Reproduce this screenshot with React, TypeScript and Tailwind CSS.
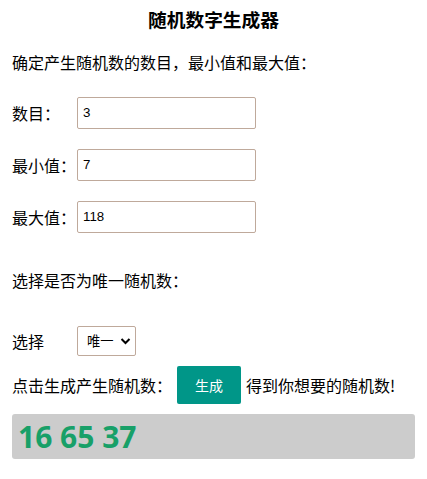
import React from "react";

const cjk = { fontFamily: '"Noto Sans CJK SC", "Noto Sans", sans-serif' };

function Row({ label, value }: { label: string; value: string }) {
  return (
    <div className="flex items-center h-[32px]">
      <span className="w-[65px] text-[16px] text-black" style={cjk}>{label}</span>
      <div className="w-[179px] h-[32px] border border-[#bfa99b] rounded-[2px] bg-white flex items-center px-[5px]">
        <span className="text-[13.3px] text-black" style={{ fontFamily: '"Liberation Sans", Arial, sans-serif' }}>{value}</span>
      </div>
    </div>
  );
}

export default function App() {
  return (
    <div className="w-[427px] h-[479px] bg-white px-[12px] text-black" style={cjk}>
      <div className="pt-[7px] h-[31px] text-center text-[18.72px] font-bold leading-[24px]">随机数字生成器</div>
      <div className="mt-[19px] text-[16px] leading-[24px]">确定产生随机数的数目，最小值和最大值：</div>
      <div className="mt-[23px]"><Row label="数目：" value="3" /></div>
      <div className="mt-[20px]"><Row label="最小值：" value="7" /></div>
      <div className="mt-[20px]"><Row label="最大值：" value="118" /></div>
      <div className="mt-[35px] text-[16px] leading-[24px]">选择是否为唯一随机数：</div>
      <div className="mt-[34px] flex items-center h-[30px]">
        <span className="w-[65px] text-[16px]">选择</span>
        <div className="w-[59px] h-[30px] border border-[#bfa99b] rounded-[2px] bg-white flex items-center pl-[9px] pr-[4px] justify-between">
          <span className="text-[13.3px]">唯一</span>
          <svg width="11" height="8" viewBox="0 0 11 8"><path d="M1.5 2 L5.5 6 L9.5 2" stroke="#000" strokeWidth="2" fill="none" /></svg>
        </div>
      </div>
      <div className="mt-[10px] flex items-center h-[38px] text-[16px]">
        <span>点击生成产生随机数：</span>
        <div className="ml-[5px] w-[64px] h-[38px] bg-[#009688] rounded-[2px] flex items-center justify-center text-white text-[14px]">生成</div>
        <span className="ml-[5px]">得到你想要的随机数!</span>
      </div>
      <div className="mt-[10px] h-[45px] bg-[#cccccc] rounded-[3px] flex items-center px-[6px]">
        <span className="text-[30px] font-bold text-[#18a068] leading-none" style={{ fontFamily: '"Open Sans", "Noto Sans", sans-serif' }}>16 65 37</span>
      </div>
    </div>
  );
}
